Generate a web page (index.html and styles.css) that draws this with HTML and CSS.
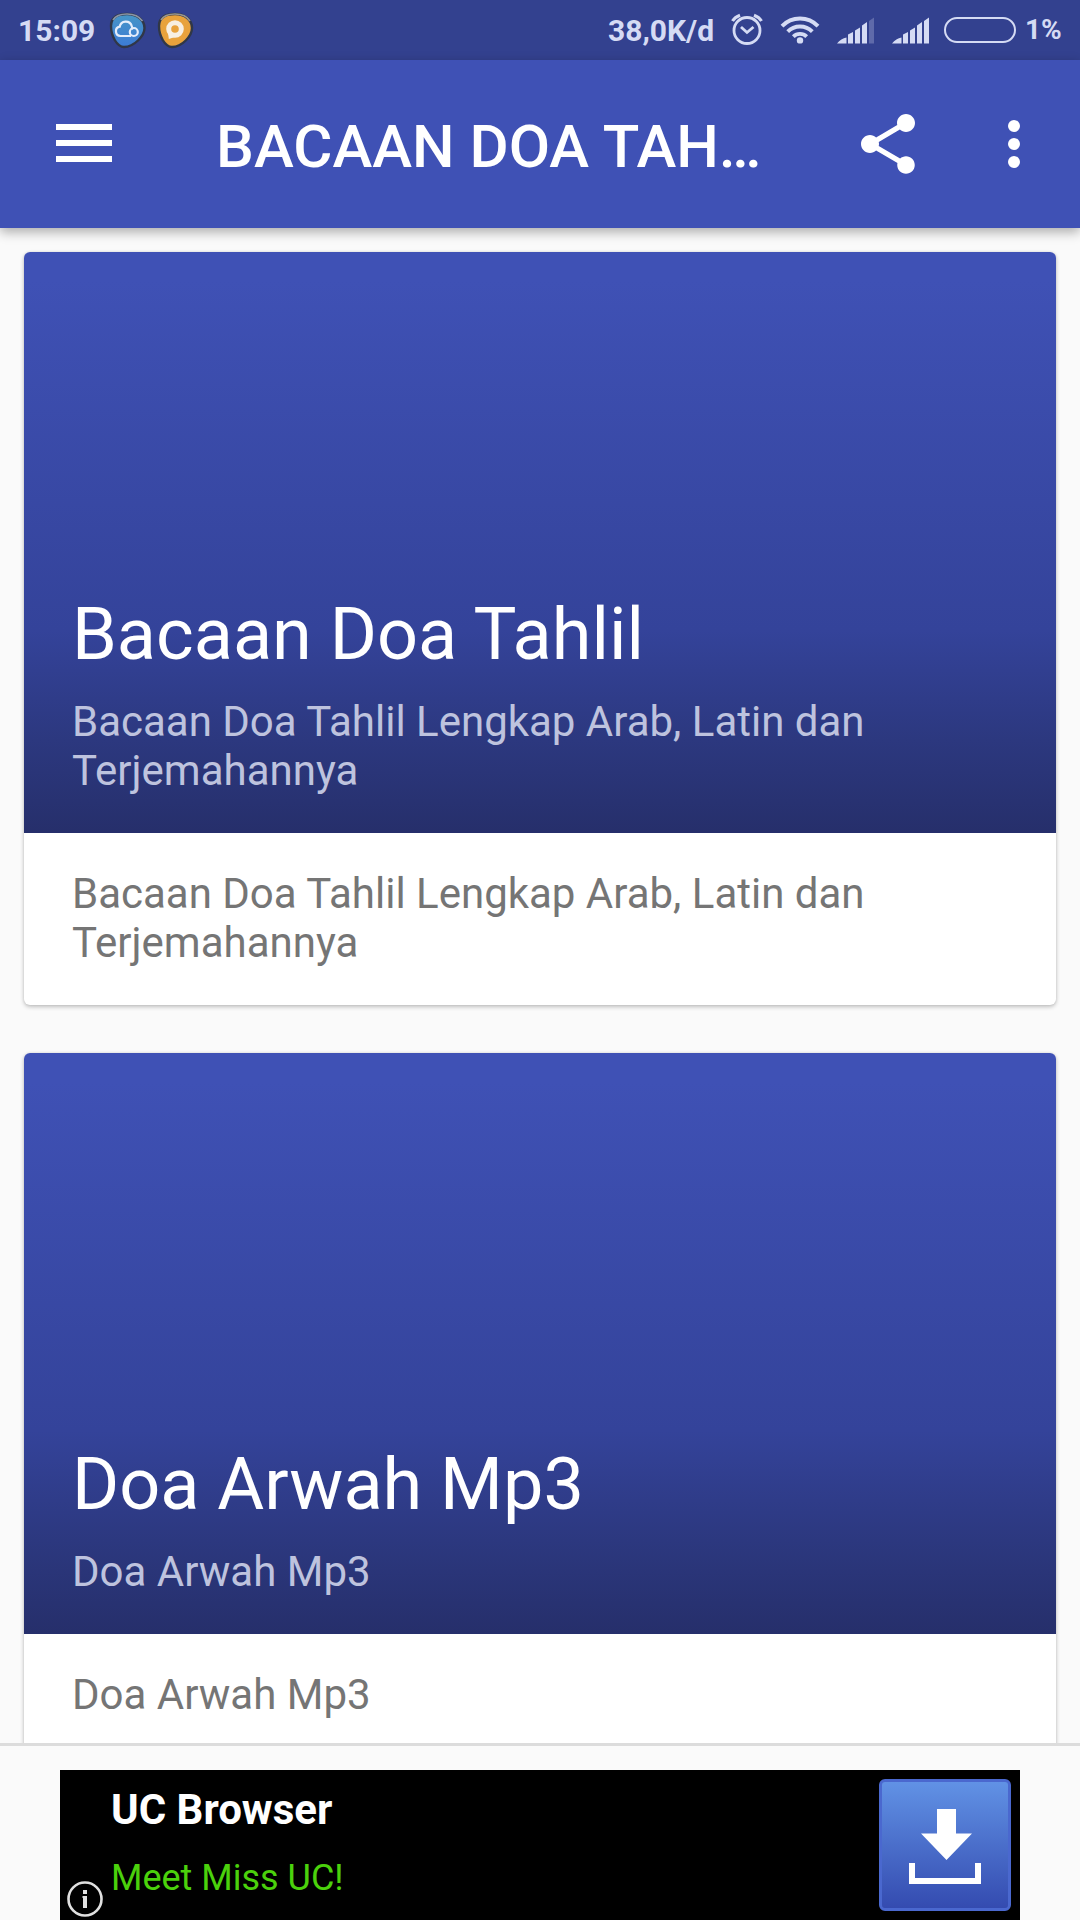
FILE: index.html
```html
<!DOCTYPE html>
<html lang="id">
<head>
<meta charset="utf-8">
<title>Bacaan Doa Tahlil</title>
<link rel="stylesheet" href="styles.css">
</head>
<body>
<div class="screen">
  <div class="status">
    <span class="clock">15:09</span>
    <svg class="badge" width="38" height="38" viewBox="0 0 38 38">
      <defs>
        <linearGradient id="blue" x1="0" y1="0" x2="0" y2="1"><stop offset="0" stop-color="#4796c6"/><stop offset="1" stop-color="#3c7bd6"/></linearGradient>
      </defs>
      <path d="M18 2C28 2 35.500 8 35.500 16S25 35 15 35C8 35 2 24 2 14 2 5 9 2 18 2z" fill="url(#blue)" stroke="#303747" stroke-width="2.400"/>
      <path d="M4 8C7 3 12 2 18 2s12 2 15.500 7" fill="none" stroke="#8b95a6" stroke-width="1.600"/>
      <path d="M22 24H11.500a4.700 4.700 0 0 1-.8-9.300 6.200 6.200 0 0 1 12-.8q.8 1.500.3 3.600" fill="none" stroke="#e4edfb" stroke-width="2.200"/>
      <circle cx="24.800" cy="20" r="4" fill="none" stroke="#e4edfb" stroke-width="2.200"/>
    </svg>
    <svg class="badge badge-next" width="38" height="38" viewBox="0 0 38 38">
      <path d="M18 2C28 2 35 8 35 16S25 35 15 35C8 35 2 24 2 14 2 5 9 2 18 2z" fill="#e8a23c" stroke="#303747" stroke-width="2.400"/>
      <path d="M4 8C7 3 12 2 18 2s12 2 15 7" fill="none" stroke="#9a9690" stroke-width="1.600"/>
      <circle cx="18" cy="17" r="6.300" fill="none" stroke="#f7efe2" stroke-width="5"/>
      <path d="M11 20l.8 7 6-2z" fill="#f7efe2"/>
    </svg>
    <span class="speed">38,0K/d</span>
    <svg class="alarm" width="34" height="34" viewBox="0 0 34 34" fill="none" stroke="#d5dbf4">
      <circle cx="17" cy="18.500" r="13" stroke-width="2.800"/>
      <path d="M11 15l6 5.500 6.500-5.500" stroke-width="2.800"/>
      <path d="M2.500 9Q5 5 10 3.200M31.500 9Q29 5 24 3.200" stroke-width="3.200"/>
    </svg>
    <svg class="wifi" width="40" height="30" viewBox="0 0 40 30" fill="none" stroke="#d5dbf4" stroke-width="3.900">
      <path d="M2 11.200a25 25 0 0 1 36 0M7.700 16.600a17.300 17.300 0 0 1 24.600 0M13.300 21.600a9.700 9.700 0 0 1 13.400 0"/>
      <circle cx="20" cy="25.400" r="3.200" fill="#d5dbf4" stroke="none"/>
    </svg>
    <svg class="signal" width="38" height="28" viewBox="0 0 38 28" fill="#d5dbf4">
      <path d="M0 26.500Q4 21.500 9.500 20.500v6zM11 17.500l5-2.500v11.500h-5zM18 13.500l5-3v16h-5zM25 8.500l5-3.500v21.500h-5z"/>
      <path d="M32 4l5-3.500v26h-5z" opacity=".27"/>
    </svg>
    <svg class="signal signal-next" width="38" height="28" viewBox="0 0 38 28" fill="#d5dbf4">
      <path d="M0 26.500Q4 21.500 9.500 20.500v6zM11 17.500l5-2.500v11.500h-5zM18 13.500l5-3v16h-5zM25 8.500l5-3.500v21.500h-5zM32 4l5-3.500v26h-5z"/>
    </svg>
    <span class="battery"></span>
    <span class="percent">1%</span>
  </div>

  <div class="appbar">
    <svg class="menu" width="56" height="38" viewBox="0 0 56 38" fill="#fff"><path d="M0 0h56v6H0zM0 16h56v6H0zM0 32h56v6H0z"/></svg>
    <h1 class="appbar-title">BACAAN DOA TAH…</h1>
    <svg class="share" width="54" height="60" viewBox="3 2 18 20" fill="#fff"><path d="M18 16.080c-.76 0-1.440.3-1.960.77L8.910 12.700c.05-.23.09-.46.09-.7s-.04-.47-.09-.7l7.050-4.110c.54.5 1.250.81 2.040.81 1.660 0 3-1.340 3-3s-1.340-3-3-3-3 1.340-3 3c0 .24.040.47.090.7L8.040 9.810C7.500 9.310 6.790 9 6 9c-1.660 0-3 1.340-3 3s1.340 3 3 3c.79 0 1.500-.31 2.040-.81l7.120 4.160c-.05.21-.08.43-.08.650 0 1.610 1.310 2.920 2.920 2.920s2.920-1.310 2.920-2.920-1.310-2.920-2.920-2.920z"/></svg>
    <svg class="more" width="12" height="48" viewBox="0 0 12 48" fill="#fff"><circle cx="6" cy="6" r="6"/><circle cx="6" cy="24" r="6"/><circle cx="6" cy="42" r="6"/></svg>
  </div>

  <div class="list">
    <div class="card">
      <div class="cover">
        <h2 class="cover-title">Bacaan Doa Tahlil</h2>
        <p class="cover-sub">Bacaan Doa Tahlil Lengkap Arab, Latin dan<br>Terjemahannya</p>
      </div>
      <p class="card-text">Bacaan Doa Tahlil Lengkap Arab, Latin dan<br>Terjemahannya</p>
    </div>
    <div class="card">
      <div class="cover">
        <h2 class="cover-title">Doa Arwah Mp3</h2>
        <p class="cover-sub">Doa Arwah Mp3</p>
      </div>
      <p class="card-text">Doa Arwah Mp3</p>
    </div>
  </div>

  <div class="adbar">
    <div class="ad">
      <svg class="info" width="38" height="38" viewBox="0 0 38 38"><circle cx="19" cy="19" r="16.500" fill="#000" stroke="#e0e0e0" stroke-width="2.600"/><path d="M17 10h4v4h-4zM16.500 16H21v12h-4V18h-.5z" fill="#e0e0e0"/></svg>
      <div class="ad-text">
        <div class="ad-title">UC Browser</div>
        <div class="ad-sub">Meet Miss UC!</div>
      </div>
      <div class="download">
        <svg width="72" height="75" viewBox="0 0 72 75" fill="#fff"><path d="M28 0h19v24.500h16L37.500 51 12 24.500h16zM0 54h6v15h60V54h6v21H0z"/></svg>
      </div>
    </div>
  </div>
</div>
</body>
</html>
```
FILE: styles.css
```css
* { box-sizing: border-box; margin: 0; padding: 0; }
body { background: #fafafa; font-family: Roboto, sans-serif; }
svg { display: block; flex: none; }
.screen {
  width: 1080px;
  height: 1920px;
  overflow: hidden;
  display: flex;
  flex-direction: column;
  background: #fafafa;
}

.status {
  flex: none;
  height: 60px;
  display: flex;
  align-items: flex-start;
  padding: 12px 0 0 18px;
  background: #33418f;
  color: #d5dbf4;
  font-weight: 700;
  white-space: nowrap;
}
.clock { width: 91px; padding-top: 1px; font-size: 30px; line-height: 36px; }
.badge-next { margin-left: 10px; }
.speed { width: 122px; padding-top: 1px; margin-left: 413px; font-size: 30px; line-height: 36px; }
.wifi { margin: 3px 0 0 16px; }
.signal { margin: 5px 0 0 17px; }
.signal-next { margin-left: 17px; }
.battery {
  width: 72px;
  height: 26px;
  margin: 5px 0 0 14px;
  border: 2px solid #d5dbf4;
  border-radius: 13px;
}
.percent { margin-left: 9px; font-size: 28px; line-height: 36px; }

.appbar {
  position: relative;
  flex: none;
  height: 168px;
  display: flex;
  align-items: center;
  padding: 0 60px 0 56px;
  background: #3f51b5;
  color: #fff;
  box-shadow: 0 4px 11px rgba(0, 0, 0, .32);
}
.menu { margin-top: -2px; }
.appbar-title {
  flex: 1;
  padding: 6px 0 0 104px;
  font-size: 60px;
  font-weight: 500;
  line-height: 70px;
  white-space: nowrap;
}
.more { margin-left: 93px; }

.list {
  flex: none;
  height: 1515px;
  overflow: hidden;
  padding: 24px;
  display: flex;
  flex-direction: column;
  gap: 48px;
}
.card {
  flex: none;
  background: #fff;
  border-radius: 6px;
  box-shadow: 0 2px 4px rgba(0, 0, 0, .22), 0 0 3px rgba(0, 0, 0, .1);
}
.cover {
  height: 581px;
  display: flex;
  flex-direction: column;
  justify-content: flex-end;
  gap: 20px;
  padding: 0 48px 38px;
  border-radius: 6px 6px 0 0;
  background: linear-gradient(#3f51b5 0%, #3f51b5 5%, #34439a 65%, #2c387f 84%, #262f6b 100%);
}
.cover-title { color: #fff; font-size: 72px; font-weight: 400; line-height: 84px; }
.cover-sub { color: #bec3de; font-size: 42px; line-height: 49px; }
.card-text { padding: 36px 48px 38px; color: #757575; font-size: 42px; line-height: 49px; }

.adbar {
  flex: none;
  height: 177px;
  padding: 24px 60px 0;
  border-top: 3px solid #dcdcdc;
  background: #fafafa;
}
.ad {
  position: relative;
  height: 150px;
  display: flex;
  justify-content: space-between;
  padding: 9px 9px 0 51px;
  background: #000;
}
.info { position: absolute; left: 6px; bottom: 2px; }
.ad-text { padding-top: 6px; }
.ad-title { color: #fff; font-size: 42px; font-weight: 700; line-height: 49px; }
.ad-sub { margin-top: 22px; color: #4bd10c; font-size: 36px; line-height: 44px; }
.download {
  width: 132px;
  height: 132px;
  display: flex;
  justify-content: center;
  padding: 27px 0 0 0;
  border: 3px solid #4a68cf;
  border-radius: 6px;
  background: linear-gradient(#6192e5, #344bb0);
}
```
